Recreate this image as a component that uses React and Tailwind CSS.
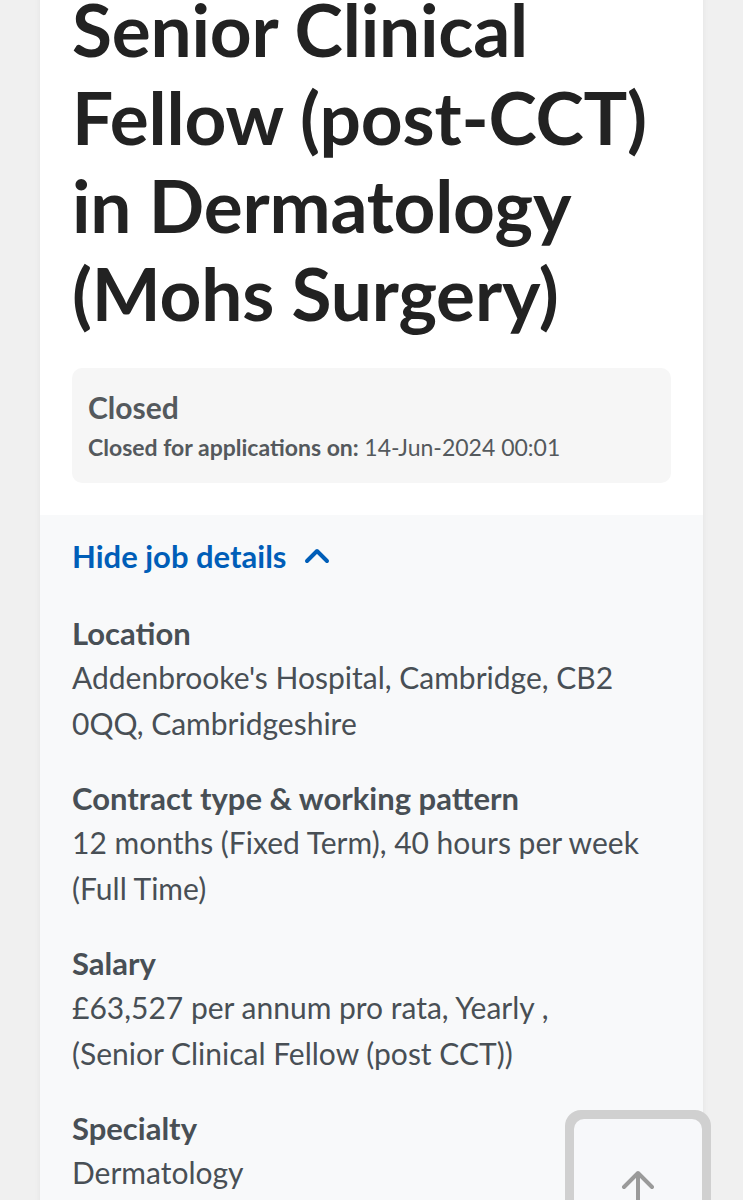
import React from 'react'

const details = [
  { label: 'Location', value: ["Addenbrooke's Hospital, Cambridge, CB2", '0QQ, Cambridgeshire'] },
  { label: 'Contract type & working pattern', value: ['12 months (Fixed Term), 40 hours per week', '(Full Time)'] },
  { label: 'Salary', value: ['£63,527 per annum pro rata, Yearly ,', '(Senior Clinical Fellow (post CCT))'] },
  { label: 'Specialty', value: ['Dermatology'] },
]

export default function App() {
  return (
    <div className="relative h-[1200px] overflow-hidden bg-[#f0f0f0] px-[40px] font-['Lato','Liberation_Sans',sans-serif]">
      <div className="w-[663px] bg-white shadow-[0_0_6px_rgba(0,0,0,0.06)]">
        {/* Title + status */}
        <div className="px-[32px] pb-[32px]">
          <h1 className="-mt-[15px] text-[73px] font-bold leading-[88px] tracking-[-0.2px] text-[#222]">
            Senior Clinical Fellow (post-CCT) in Dermatology (Mohs Surgery)
          </h1>
          <div className="mt-[31px] rounded-[10px] bg-[#f6f6f6] px-[16px] pt-[22px] pb-[22px]">
            <div className="text-[30px] font-bold leading-[34px] text-[#54595d]">Closed</div>
            <div className="mt-[9px] text-[23px] leading-[28px] text-[#54595d]">
              <span className="font-bold">Closed for applications on: </span>
              14-Jun-2024 00:01
            </div>
          </div>
        </div>

        {/* Job details */}
        <div className="min-h-[700px] bg-[#f8f9fa] px-[32px] pt-[19px]">
          <button className="flex items-center gap-[17px] text-[31px] font-bold leading-[44px] text-[#005eb8]">
            Hide job details
            <svg width="26" height="16" viewBox="0 0 26 16" fill="none" stroke="#005eb8" strokeWidth="4" strokeLinecap="round" strokeLinejoin="round">
              <path d="M3 13 L13 3 L23 13" />
            </svg>
          </button>

          <div className="mt-[34px] flex flex-col gap-[31px]">
            {details.map((d) => (
              <div key={d.label} className="text-[#484f55]">
                <div className="text-[31px] font-bold leading-[42px]">{d.label}</div>
                {d.value.map((line) => (
                  <div key={line} className="text-[30px] leading-[46px]">{line}</div>
                ))}
              </div>
            ))}
          </div>
        </div>
      </div>

      {/* Back to top */}
      <div className="absolute left-[565px] top-[1110px] h-[140px] w-[146px] rounded-[16px] bg-[#d0d0d0] p-[9px]">
        <div className="flex h-full w-full justify-center rounded-[10px] bg-[#f7f8fa] pt-[50px]">
          <svg width="36" height="40" viewBox="0 0 36 40" fill="none" stroke="#9a9a9a" strokeWidth="4" strokeLinecap="round" strokeLinejoin="round">
            <path d="M18 4 L18 40 M4 18 L18 4 L32 18" />
          </svg>
        </div>
      </div>
    </div>
  )
}
